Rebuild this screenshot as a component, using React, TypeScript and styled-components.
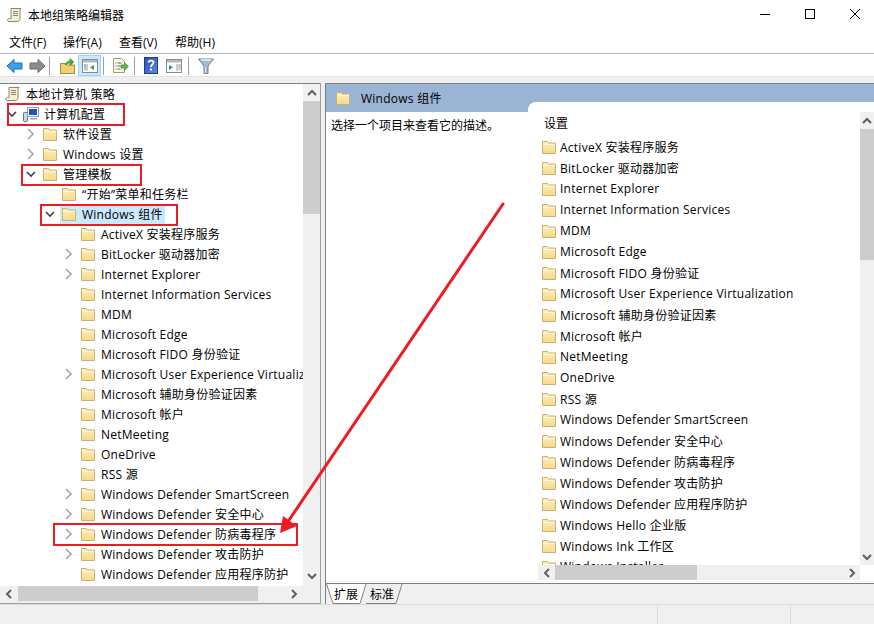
import React from "react";
import styled, { createGlobalStyle } from "styled-components";

const Global = createGlobalStyle`
  html, body { margin: 0; padding: 0; background: #fff; }
  * { box-sizing: border-box; }
  body { font-family: "Open Sans", "Noto Sans CJK SC", sans-serif; font-size: 12px; color: #000; }
`;

const Page = styled.div`
  position: relative;
  width: 874px;
  height: 624px;
  overflow: hidden;
  display: flex;
  flex-direction: column;
  background: #fff;
`;
const TitleBar = styled.div`
  height: 30px;
  display: flex;
  align-items: center;
  padding: 0 0 0 7px;
  gap: 5px;
`;
const TitleText = styled.div`
  flex: 1;
  font-size: 12px;
`;
const WinControls = styled.div`
  display: flex;
  gap: 35px;
  padding: 0 14px 2px 0;
  align-items: center;
`;
const MenuBar = styled.div`
  height: 24px;
  display: flex;
  align-items: center;
  padding: 0 0 0 9px;
  border-bottom: 1px solid #b5b3c4;
`;
const MenuItem = styled.div<{ $w: number }>`
  width: ${(p) => p.$w}px;
  white-space: nowrap;
`;
const Toolbar = styled.div`
  height: 22px;
  display: flex;
  align-items: center;
  padding: 1px 0 0 3px;
`;
const ToolBtn = styled.div<{ $active?: boolean; $w?: number }>`
  width: ${(p) => p.$w ?? 23}px;
  height: 21px;
  flex: none;
  display: flex;
  align-items: center;
  justify-content: center;
  background: ${(p) => (p.$active ? "#cce8ff" : "transparent")};
  border: 1px solid ${(p) => (p.$active ? "#99d1ff" : "transparent")};
`;
const ToolSep = styled.div<{ $l: number; $r: number }>`
  width: 1px;
  height: 18px;
  flex: none;
  background: #a0a0a0;
  margin: 0 ${(p) => p.$r}px 0 ${(p) => p.$l}px;
`;
const Strip = styled.div`
  height: 7px;
  background: #f0f0f0;
  border-top: 1px solid #e2e2e2;
`;
const Main = styled.div`
  height: 521px;
  display: flex;
  background: #f0f0f0;
`;
const TreePanel = styled.div`
  width: 321px;
  border-top: 1px solid #808080;
  border-right: 1px solid #a0a0a0;
  border-bottom: 1px solid #a0a0a0;
  display: grid;
  grid-template-columns: 303px 17px;
  grid-template-rows: 502px 15px;
  background: #f0f0f0;
`;
const Tree = styled.div`
  background: #fff;
  overflow: hidden;
`;
const TreeRow = styled.div<{ $level: number }>`
  height: 20px;
  display: flex;
  align-items: center;
  white-space: nowrap;
  padding-left: ${(p) => (p.$level === 0 ? 5 : 4 + 19 * (p.$level - 1))}px;
  letter-spacing: 0.25px;
`;
const Chevron = styled.span`
  width: 19px;
  flex: none;
  display: flex;
  align-items: center;
  padding-left: 3px;
`;
const RowItem = styled.span<{ $selected?: boolean }>`
  display: flex;
  align-items: center;
  height: 20px;
  margin-left: -1px;
  padding: 0 2px 0 1px;
  background: ${(p) => (p.$selected ? "#cce8ff" : "transparent")};
`;
const IconSlot = styled.span`
  width: 21px;
  flex: none;
  display: flex;
  align-items: center;
`;
const VScroll = styled.div<{ $thumbH: number }>`
  grid-row: 1 / span 2;
  grid-column: 2;
  display: flex;
  flex-direction: column;
  background: #f0f0f0;
  & > i { display: block; height: ${(p) => p.$thumbH}px; background: #cdcdcd; flex: none; }
`;
const VTrack = styled.div`
  flex: 1;
`;
const ScrollBtn = styled.div<{ $w?: number; $h?: number }>`
  width: ${(p) => p.$w ?? 17}px;
  height: ${(p) => p.$h ?? 17}px;
  flex: none;
  display: flex;
  align-items: center;
  justify-content: center;
`;
const HScroll = styled.div<{ $thumbW: number }>`
  height: 15px;
  display: flex;
  align-items: center;
  background: #f0f0f0;
  & > i { display: block; height: 15px; width: ${(p) => p.$thumbW}px; background: #cdcdcd; flex: none; }
`;
const HTrack = styled.div`
  flex: 1;
`;
const Splitter = styled.div`
  width: 4px;
`;
const RightPane = styled.div`
  flex: 1;
  border-top: 1px solid #808080;
  border-left: 1px solid #808080;
  display: flex;
  flex-direction: column;
  min-width: 0;
`;
const PaneHeader = styled.div`
  height: 28px;
  padding: 0 0 0 9px;
  background: #9ab5d3;
  display: flex;
  align-items: center;
  gap: 10px;
  flex: none;
`;
const HeaderText = styled.span`
  font-size: 12px;
  letter-spacing: 0.25px;
`;
const PaneBody = styled.div`
  flex: 1;
  display: flex;
  background: #fff;
  min-height: 0;
`;
const Description = styled.div`
  width: 202px;
  padding: 6px 0 0 5px;
  line-height: 16px;
  flex: none;
`;
const ListPanel = styled.div`
  flex: 1;
  position: relative;
  margin-top: -10px;
  border-top-left-radius: 8px;
  background: #fff;
  display: flex;
  flex-direction: column;
  min-width: 0;
`;
const ListTop = styled.div`
  flex: 1;
  display: flex;
  min-height: 0;
`;
const ListCol = styled.div`
  flex: 1;
  overflow: hidden;
  padding: 14px 0 0 13px;
`;
const ListHead = styled.div`
  height: 16px;
  line-height: 16px;
  padding-left: 3px;
  margin-bottom: 4px;
`;
const ListRow = styled.div`
  height: 21px;
  display: flex;
  align-items: center;
  gap: 3px;
  white-space: nowrap;
  letter-spacing: 0.25px;
`;
const ListVScroll = styled.div`
  width: 14px;
  margin-top: 10px;
  flex: none;
  display: flex;
  flex-direction: column;
  background: #f0f0f0;
  & > i { display: block; height: 131px; background: #cdcdcd; flex: none; }
`;
const ListBottom = styled.div`
  height: 18px;
  padding: 0 14px 3px 10px;
  flex: none;
`;
const TabZone = styled.div`
  height: 20px;
  flex: none;
  background: #f0f0f0;
  border-top: 1px solid #808080;
  display: flex;
  margin-bottom: 1px;
`;
const Tab = styled.div<{ $w: number; $shift?: number }>`
  position: relative;
  width: ${(p) => p.$w}px;
  height: 20px;
  display: flex;
  align-items: center;
  justify-content: center;
  padding-right: ${(p) => p.$shift ?? 0}px;
  & > svg { position: absolute; left: 0; top: 0; }
  & > span { position: relative; }
`;
const StatusBar = styled.div`
  flex: 1;
  background: #f0f0f0;
  display: flex;
  border-top: 1px solid #dcdcdc;
`;
const StatusCell = styled.div<{ $w?: number }>`
  width: ${(p) => (p.$w ? `${p.$w}px` : "auto")};
  flex: ${(p) => (p.$w ? "none" : 1)};
  border-right: 1px solid #dcdcdc;
  &:last-child { border-right: 0; }
`;
const RedBox = styled.div<{ $x: number; $y: number; $w: number; $h: number }>`
  position: absolute;
  left: ${(p) => p.$x}px;
  top: ${(p) => p.$y}px;
  width: ${(p) => p.$w}px;
  height: ${(p) => p.$h}px;
  border: 2px solid #ed1c24;
`;
const ArrowOverlay = styled.svg`
  position: absolute;
  left: 0;
  top: 0;
  pointer-events: none;
`;

const Folder = () => (
  <svg width="16" height="14" viewBox="0 0 16 14">
    <defs>
      <linearGradient id="fg" x1="0" y1="0" x2="0" y2="1">
        <stop offset="0" stopColor="#fdf0c0" />
        <stop offset="1" stopColor="#f6d987" />
      </linearGradient>
    </defs>
    <path d="M1.5 13.5V1.5h5l1 1.5h7v10.5z" fill="url(#fg)" stroke="#d0b070" />
    <path d="M2.5 4.5h11" stroke="#fff8dc" />
  </svg>
);
const Right = () => (
  <svg width="9" height="12" viewBox="0 0 9 12"><path d="M2 1l5 5-5 5" fill="none" stroke="#a6a6a6" strokeWidth="1.6" /></svg>
);
const Down = () => (
  <svg width="10" height="8" viewBox="0 0 10 8"><path d="M1 2l4 4 4-4" fill="none" stroke="#404040" strokeWidth="1.6" /></svg>
);
const ScrollChev = ({ d }: { d: string }) => (
  <svg width="10" height="10" viewBox="0 0 10 10"><path d={d} fill="none" stroke="#606060" strokeWidth="2" /></svg>
);
const Scroll = () => (
  <svg width="16" height="16" viewBox="0 0 16 16">
    <path d="M4 1.5h10c-1 1-1 2-1 3v7c0 1.500-1 3-2.500 3H2c-1 0-1.500-.7-1.500-1.500S1.500 11.500 2.500 11.500H4z" fill="#f5efd8" stroke="#8c8468" />
    <path d="M6 4.500h5M6 6.500h5M6 8.500h5" stroke="#8c8468" />
  </svg>
);
const Computer = () => (
  <svg width="16" height="16" viewBox="0 0 16 16">
    <rect x="0.500" y="6.500" width="4" height="9" rx="1" fill="#cfd8e4" stroke="#5e7187" />
    <rect x="4.500" y="1.500" width="11" height="9" fill="#fff" stroke="#8fa0b5" />
    <rect x="6" y="3" width="8" height="6" fill="#1a55c8" />
    <path d="M7 12h7v1.500H7z" fill="#8fa0b5" />
  </svg>
);
const NavArrow = ({ flip, c1, c2 }: { flip?: boolean; c1: string; c2: string }) => (
  <svg width="17" height="16" viewBox="0 0 17 16" style={flip ? { transform: "scaleX(-1)" } : undefined}>
    <path d="M1 8l7-6.500V5h8v6H8v3.500z" fill={c1} stroke={c2} />
  </svg>
);
const UpFolder = () => (
  <svg width="15" height="16" viewBox="0 0 15 16">
    <path d="M.5 15.500V5.500h5l1 1.500h8v8.500z" fill="#f3d078" stroke="#a88a3a" />
    <path d="M5 7c1-3 3-4 5-4V.5L14 4l-4 3.500V5C8 5 6.500 6 5 7z" fill="#3fae3f" stroke="#2f7f2f" strokeWidth=".5" />
  </svg>
);
const PaneIcon = ({ arrow, right }: { arrow: string; right?: boolean }) => (
  <svg width="16" height="14" viewBox="0 0 16 14">
    <rect x=".5" y=".5" width="15" height="13" fill="#fff" stroke="#8a8a8a" />
    <rect x="1" y="1" width="14" height="2.500" fill="#b8b8b8" />
    <path d={right ? "M11 5v7" : "M5 5v7"} stroke="#9a9a9a" />
    <path d={right ? "M3 6l4 2.500L3 11z" : "M12 6L8 8.500l4 2.500z"} fill={arrow} />
    <path d={right ? "M12.500 6h2M12.500 8h2M12.500 10h2" : "M2 6h2M2 8h2M2 10h2"} stroke="#777" />
  </svg>
);
const ExportIcon = () => (
  <svg width="17" height="17" viewBox="0 0 17 17">
    <path d="M1.500 1.500h8l3 3v11h-11z" fill="#fbf6e4" stroke="#a09a80" />
    <path d="M3.500 6h1M5.500 6h4M3.500 9h1M5.500 9h3M3.500 12h1M5.500 12h3" stroke="#666" />
    <path d="M9 8h3.500V5.500l4 4-4 4V11H9z" fill="#58b848" stroke="#3c8a30" strokeWidth=".6" />
  </svg>
);
const HelpIcon = () => (
  <svg width="14" height="17" viewBox="0 0 14 17">
    <defs><linearGradient id="hg" x1="0" y1="0" x2="1" y2="1"><stop offset="0" stopColor="#2e4fb0" /><stop offset="1" stopColor="#5f8be0" /></linearGradient></defs>
    <rect x=".5" y=".5" width="13" height="16" fill="url(#hg)" stroke="#1e3a8e" />
    <path d="M4.500 5.500C4.500 3 9.500 3 9.500 5.500c0 2-2.500 2-2.500 4.500" fill="none" stroke="#fff" strokeWidth="1.800" />
    <rect x="6" y="11.500" width="2" height="2" fill="#fff" />
  </svg>
);
const FilterIcon = () => (
  <svg width="16" height="16" viewBox="0 0 16 16">
    <path d="M.5 1h15L10 8v7.500H6V8z" fill="#a9bccb" stroke="#6d8191" />
    <path d="M7.500 8.500v6" stroke="#e0e8ee" />
    <ellipse cx="8" cy="2" rx="6" ry="1" fill="#dfe8ef" />
  </svg>
);

type Node = { l: number; t: string; c?: "r" | "d"; sel?: boolean; icon?: "doc" | "pc" };
const L4 = (t: string, r?: boolean): Node => ({ l: 4, t, c: r ? "r" : undefined });
const nodes: Node[] = [
  { l: 0, t: "本地计算机 策略", icon: "doc" },
  { l: 1, t: "计算机配置", c: "d", icon: "pc" },
  { l: 2, t: "软件设置", c: "r" },
  { l: 2, t: "Windows 设置", c: "r" },
  { l: 2, t: "管理模板", c: "d" },
  { l: 3, t: "“开始”菜单和任务栏" },
  { l: 3, t: "Windows 组件", c: "d", sel: true },
  L4("ActiveX 安装程序服务"),
  L4("BitLocker 驱动器加密", true),
  L4("Internet Explorer", true),
  L4("Internet Information Services"),
  L4("MDM"),
  L4("Microsoft Edge"),
  L4("Microsoft FIDO 身份验证"),
  L4("Microsoft User Experience Virtualization", true),
  L4("Microsoft 辅助身份验证因素"),
  L4("Microsoft 帐户"),
  L4("NetMeeting"),
  L4("OneDrive"),
  L4("RSS 源"),
  L4("Windows Defender SmartScreen", true),
  L4("Windows Defender 安全中心", true),
  L4("Windows Defender 防病毒程序", true),
  L4("Windows Defender 攻击防护", true),
  L4("Windows Defender 应用程序防护"),
];
const listItems = [
  "ActiveX 安装程序服务", "BitLocker 驱动器加密", "Internet Explorer", "Internet Information Services",
  "MDM", "Microsoft Edge", "Microsoft FIDO 身份验证", "Microsoft User Experience Virtualization",
  "Microsoft 辅助身份验证因素", "Microsoft 帐户", "NetMeeting", "OneDrive", "RSS 源",
  "Windows Defender SmartScreen", "Windows Defender 安全中心", "Windows Defender 防病毒程序",
  "Windows Defender 攻击防护", "Windows Defender 应用程序防护", "Windows Hello 企业版", "Windows Ink 工作区",
  "Windows Installer",
];
const menus: [string, number][] = [["文件(F)", 54], ["操作(A)", 56], ["查看(V)", 56], ["帮助(H)", 56]];

export default function App() {
  return (
    <Page>
      <Global />
      <TitleBar>
        <Scroll />
        <TitleText>本地组策略编辑器</TitleText>
        <WinControls>
          <svg width="10" height="10" viewBox="0 0 10 10"><path d="M0 5.500h10" stroke="#000" /></svg>
          <svg width="10" height="10" viewBox="0 0 10 10"><rect x=".5" y=".5" width="9" height="9" fill="none" stroke="#000" /></svg>
          <svg width="10" height="10" viewBox="0 0 10 10"><path d="M0 0l10 10M10 0L0 10" stroke="#000" /></svg>
        </WinControls>
      </TitleBar>
      <MenuBar>{menus.map(([m, w]) => <MenuItem key={m} $w={w}>{m}</MenuItem>)}</MenuBar>
      <Toolbar>
        <ToolBtn><NavArrow c1="#3f9fe8" c2="#1f6fb5" /></ToolBtn>
        <ToolBtn><NavArrow flip c1="#8c8c8c" c2="#6a6a6a" /></ToolBtn>
        <ToolSep $l={0} $r={6} />
        <ToolBtn $w={22}><UpFolder /></ToolBtn>
        <ToolBtn $active><PaneIcon arrow="#2aa04a" /></ToolBtn>
        <ToolSep $l={2} $r={6} />
        <ToolBtn $w={20}><ExportIcon /></ToolBtn>
        <ToolSep $l={4} $r={4} />
        <ToolBtn><HelpIcon /></ToolBtn>
        <ToolBtn><PaneIcon right arrow="#2aa04a" /></ToolBtn>
        <ToolSep $l={3} $r={5} />
        <ToolBtn><FilterIcon /></ToolBtn>
      </Toolbar>
      <Strip />
      <Main>
        <TreePanel>
          <Tree>
            {nodes.map((n) => (
              <TreeRow key={n.t} $level={n.l}>
                {n.l > 0 && (
                  <Chevron>{n.c === "r" ? <Right /> : n.c === "d" ? <Down /> : null}</Chevron>
                )}
                <RowItem $selected={n.sel}>
                  <IconSlot>
                    {n.icon === "doc" ? <Scroll /> : n.icon === "pc" ? <Computer /> : <Folder />}
                  </IconSlot>
                  {n.t}
                </RowItem>
              </TreeRow>
            ))}
          </Tree>
          <VScroll $thumbH={113}>
            <ScrollBtn><ScrollChev d="M1 7l4-4 4 4" /></ScrollBtn>
            <i />
            <VTrack />
            <ScrollBtn><ScrollChev d="M1 3l4 4 4-4" /></ScrollBtn>
            <ScrollBtn />
          </VScroll>
          <HScroll $thumbW={240}>
            <ScrollBtn $w={18} $h={15}><ScrollChev d="M7 1L3 5l4 4" /></ScrollBtn>
            <i />
            <HTrack />
            <ScrollBtn $w={18} $h={15}><ScrollChev d="M3 1l4 4-4 4" /></ScrollBtn>
          </HScroll>
        </TreePanel>
        <Splitter />
        <RightPane>
          <PaneHeader><Folder /><HeaderText>Windows 组件</HeaderText></PaneHeader>
          <PaneBody>
            <Description>选择一个项目来查看它的描述。</Description>
            <ListPanel>
              <ListTop>
                <ListCol>
                  <ListHead>设置</ListHead>
                  {listItems.map((t) => (
                    <ListRow key={t}><Folder />{t}</ListRow>
                  ))}
                </ListCol>
                <ListVScroll>
                  <ScrollBtn $w={14}><ScrollChev d="M1 7l4-4 4 4" /></ScrollBtn>
                  <i />
                  <VTrack />
                  <ScrollBtn $w={14}><ScrollChev d="M1 3l4 4 4-4" /></ScrollBtn>
                </ListVScroll>
              </ListTop>
              <ListBottom>
                <HScroll $thumbW={142}>
                  <ScrollBtn $h={15}><ScrollChev d="M7 1L3 5l4 4" /></ScrollBtn>
                  <i />
                  <HTrack />
                  <ScrollBtn $h={15}><ScrollChev d="M3 1l4 4-4 4" /></ScrollBtn>
                </HScroll>
              </ListBottom>
            </ListPanel>
          </PaneBody>
          <TabZone>
            <Tab $w={40}>
              <svg width="42" height="20" viewBox="0 0 42 20"><path d="M.5 0L7 19.500h27L40 0" fill="#fff" stroke="#808080" /></svg>
              <span>扩展</span>
            </Tab>
            <Tab $w={36} $shift={4}>
              <svg width="38" height="20" viewBox="0 0 38 20"><path d="M0 19.500h30L36 0" fill="none" stroke="#808080" /></svg>
              <span>标准</span>
            </Tab>
          </TabZone>
        </RightPane>
      </Main>
      <StatusBar>
        <StatusCell $w={658} />
        <StatusCell $w={133} />
        <StatusCell />
      </StatusBar>
      <RedBox $x={7} $y={103} $w={118} $h={23} />
      <RedBox $x={21} $y={164} $w={121} $h={22} />
      <RedBox $x={40} $y={204} $w={138} $h={22} />
      <RedBox $x={53} $y={523} $w={245} $h={23} />
      <ArrowOverlay width="874" height="624" viewBox="0 0 874 624">
        <path d="M503 204L285 526" stroke="#ed1c24" strokeWidth="3" strokeLinecap="round" />
        <path d="M280 533L283 516L297 526z" fill="#ed1c24" />
      </ArrowOverlay>
    </Page>
  );
}
